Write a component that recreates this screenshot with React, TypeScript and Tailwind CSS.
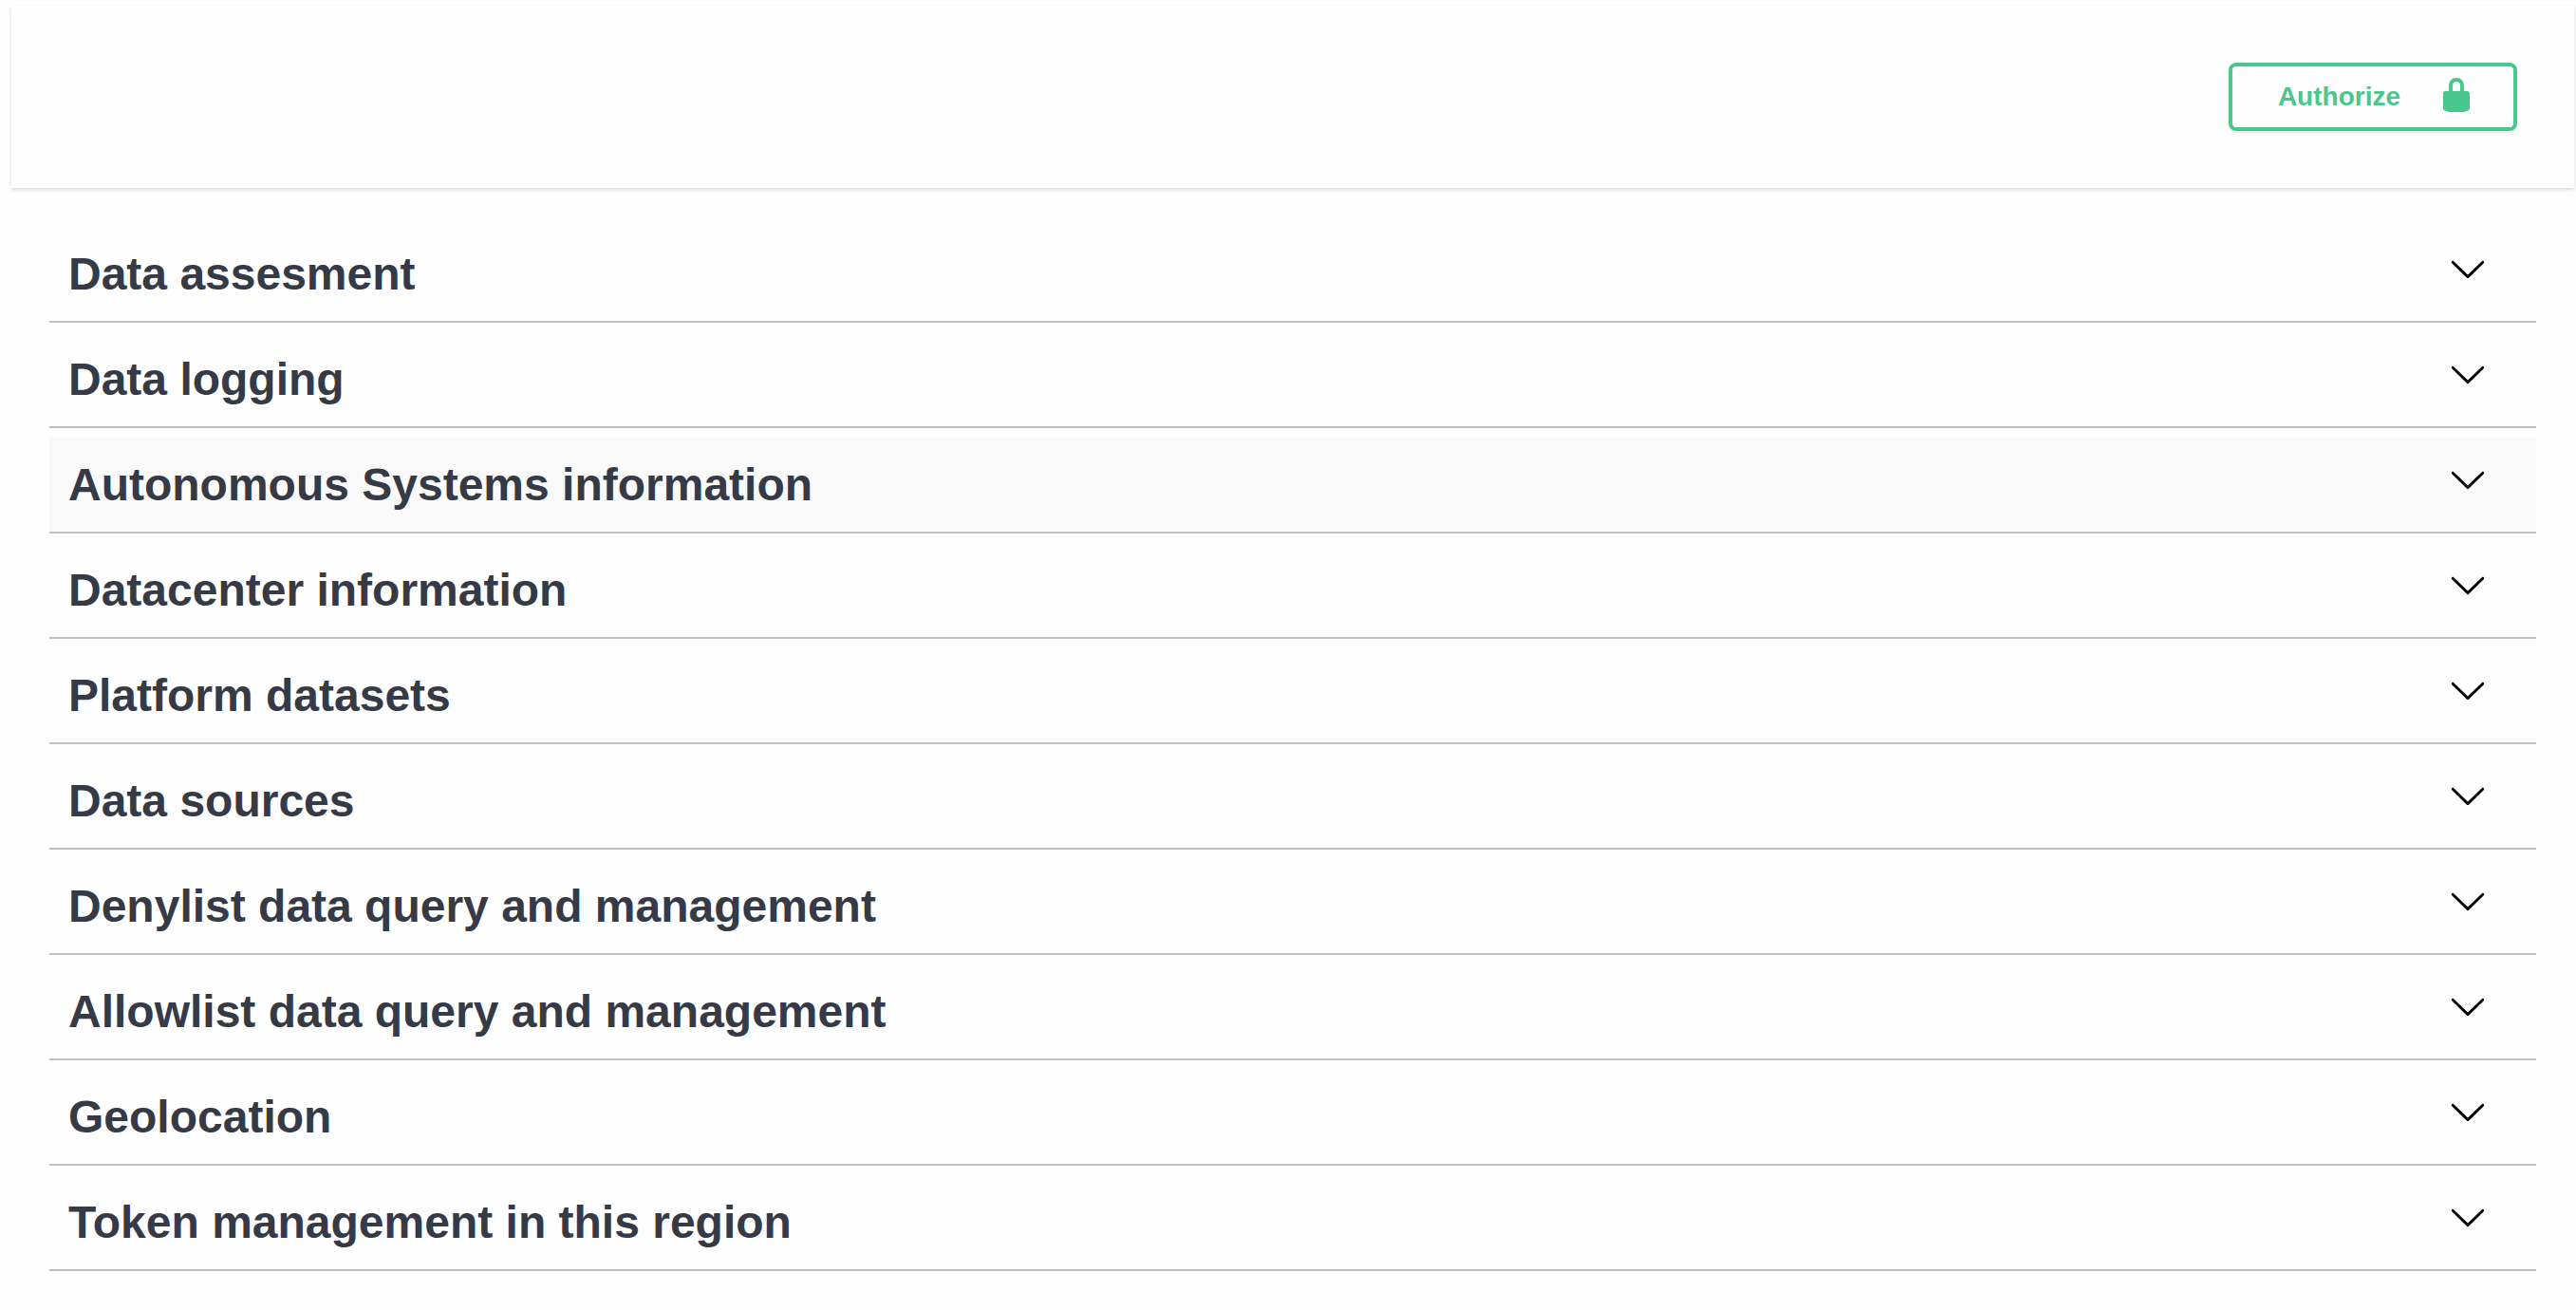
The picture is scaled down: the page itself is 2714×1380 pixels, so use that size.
const sections = [
  { title: "Data assesment" },
  { title: "Data logging" },
  { title: "Autonomous Systems information", active: true },
  { title: "Datacenter information" },
  { title: "Platform datasets" },
  { title: "Data sources" },
  { title: "Denylist data query and management" },
  { title: "Allowlist data query and management" },
  { title: "Geolocation" },
  { title: "Token management in this region" },
];

function LockIcon() {
  return (
    <svg viewBox="0 0 20 20" className="size-10 fill-current" aria-hidden="true">
      <path d="M15.8 8H14V5.6C14 2.703 12.665 1 10 1 7.334 1 6 2.703 6 5.6V8H4c-.553 0-1 .646-1 1.199V17c0 .549.428 1.139.951 1.307l1.197.387C5.672 18.861 6.55 19 7.1 19h5.8c.549 0 1.428-.139 1.951-.307l1.196-.387c.524-.167.953-.757.953-1.306V9.199C17 8.646 16.352 8 15.8 8zM12 8H8V5.199C8 3.754 8.797 3 10 3c1.203 0 2 .754 2 2.199V8z" />
    </svg>
  );
}

function ChevronIcon() {
  return (
    <svg viewBox="0 0 20 20" className="size-10 fill-black" aria-hidden="true">
      <path d="M17.418 6.109c.272-.268.709-.268.979 0s.271.701 0 .969l-7.908 7.83c-.27.268-.707.268-.979 0l-7.908-7.83c-.27-.268-.27-.701 0-.969.271-.268.709-.268.979 0L10 13.25l7.418-7.141z" />
    </svg>
  );
}

export default function App() {
  return (
    <div className="min-h-screen bg-[#fefefe] pt-1.5 pr-0.5 pl-3 font-['Liberation_Sans',Arial,sans-serif] font-bold text-[#353a46]">
      <header className="flex justify-end bg-[#fefefe] p-[60px] shadow-[0_2px_4px_rgba(0,0,0,0.15)]">
        <button className="flex h-[72px] items-start rounded-lg border-4 border-[#49c78c] pt-2.5 pr-10 pl-12 text-[28px] leading-[44px] text-[#49c78c] shadow-[0_2px_4px_rgba(0,0,0,0.1)]">
          <span className="pr-[39px]">Authorize</span>
          <LockIcon />
        </button>
      </header>
      <main className="px-10 pt-[41px]">
        {sections.map(({ title, active }) => (
          <h3 key={title} className="mb-2.5">
            <button
              className={`flex w-full items-center justify-between border-b-2 border-[#bfbfc5] py-5 pr-[52px] pl-5 text-left text-[48px] leading-[59px] ${active ? "bg-[#f9f9f9]" : ""}`}
            >
              <span>{title}</span>
              <span className="pb-3">
                <ChevronIcon />
              </span>
            </button>
          </h3>
        ))}
      </main>
    </div>
  );
}
